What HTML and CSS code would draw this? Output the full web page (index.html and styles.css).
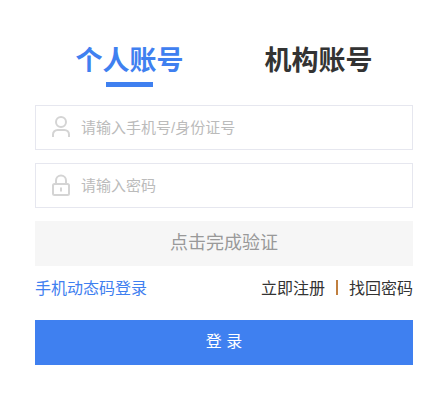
FILE: index.html
```html
<!DOCTYPE html>
<html lang="zh-CN">
<head>
  <meta charset="UTF-8">
  <title>登录</title>
  <link rel="stylesheet" href="styles.css">
</head>
<body>

  <div class="login-box">
    <div class="tabs">
      <div class="tab active">个人账号</div>
      <div class="tab">机构账号</div>
    </div>

    <div class="field">
      <svg class="field-icon" width="20" height="22" viewBox="0 0 20 22" fill="none" stroke="#d4d4d4" stroke-width="2">
        <circle cx="10" cy="6" r="5"/>
        <path d="M2 21v-2.500a4.500 4.500 0 0 1 4.500-4.500h7a4.500 4.500 0 0 1 4.500 4.500V21"/>
      </svg>
      <span class="placeholder">请输入手机号/身份证号</span>
    </div>

    <div class="field">
      <svg class="field-icon" width="20" height="22" viewBox="0 0 20 22" fill="none" stroke="#d4d4d4" stroke-width="2">
        <path d="M5 10V6.500a5 5 0 0 1 10 0V10"/>
        <rect x="2" y="10" width="16" height="11" rx="1.500"/>
        <path d="M10 13.500v4"/>
      </svg>
      <span class="placeholder">请输入密码</span>
    </div>

    <div class="verify">点击完成验证</div>

    <div class="links">
      <a class="link-blue">手机动态码登录</a>
      <div class="links-right">
        <a>立即注册</a>
        <span class="sep"></span>
        <a>找回密码</a>
      </div>
    </div>

    <button class="login-btn">登 录</button>
  </div>

</body>
</html>
```

FILE: styles.css
```css
* {
  box-sizing: border-box;
}

body {
  margin: 0;
  background: #fff;
  font-family: "Liberation Sans", "Noto Sans CJK SC", sans-serif;
}

.login-box {
  width: 378px;
  margin-left: 35px;
  padding-top: 40px;
}

.tabs {
  display: flex;
  margin-bottom: 18px;
}

.tab {
  flex: 1;
  position: relative;
  height: 47px;
  line-height: 42px;
  text-align: center;
  font-size: 27px;
  font-weight: bold;
  color: #333;
}

.tab.active {
  color: #3f80f0;
}

.tab.active::after {
  content: "";
  position: absolute;
  left: 71px;
  bottom: 0;
  width: 47px;
  height: 5px;
  background: #3f80f0;
}

.field {
  display: flex;
  align-items: center;
  height: 45px;
  margin-bottom: 13px;
  padding-left: 15px;
  padding-bottom: 2px;
  border: 1px solid #e6e7ef;
}

.field-icon {
  margin-right: 10px;
}

.placeholder {
  font-size: 15px;
  color: #bbb;
}

.verify {
  height: 45px;
  line-height: 45px;
  text-align: center;
  font-size: 18px;
  color: #999;
  background: #f6f6f6;
}

.links {
  display: flex;
  justify-content: space-between;
  align-items: center;
  height: 54px;
  padding-bottom: 12px;
  font-size: 16px;
  color: #333;
}

.link-blue {
  color: #3f80f0;
}

.links-right {
  display: flex;
  align-items: center;
  gap: 11px;
}

.sep {
  width: 2px;
  height: 15px;
  background: #c07f3f;
}

.login-btn {
  display: block;
  width: 100%;
  height: 45px;
  padding-bottom: 7px;
  border: none;
  background: #3f80f0;
  color: #fff;
  font-family: inherit;
  font-size: 16px;
}
```
